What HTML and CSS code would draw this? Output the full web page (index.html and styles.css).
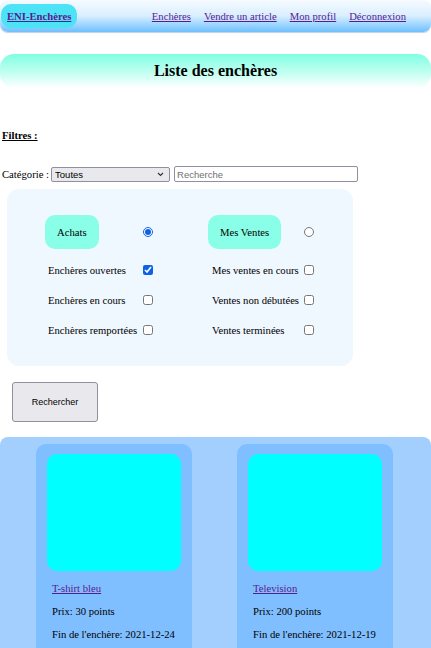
FILE: index.html
```html
<!DOCTYPE html>
<html lang="fr">
<head>
<meta charset="utf-8">
<title>ENI-Enchères</title>
<link rel="stylesheet" href="styles.css">
</head>
<body>
<header class="topbar">
  <a class="logo" href="#">ENI-Enchères</a>
  <nav class="nav">
    <a href="#">Enchères</a>
    <a href="#">Vendre un article</a>
    <a href="#">Mon profil</a>
    <a href="#">Déconnexion</a>
  </nav>
</header>

<h1 class="title-band">Liste des enchères</h1>

<section class="filters">
  <p class="filters-label">Filtres :</p>
  <div class="search-row">
    <label class="cat-label" for="cat">Catégorie :</label>
    <span class="select-wrap">
      <select id="cat" class="cat-select"><option>Toutes</option></select>
      <svg class="chevron" width="7" height="5" viewBox="0 0 7 5"><path d="M1 1 L3.5 3.5 L6 1" fill="none" stroke="#333" stroke-width="1.1"/></svg>
    </span>
    <input class="search-input" type="text" placeholder="Recherche">
  </div>

  <div class="panel">
    <span class="pill">Achats</span>
    <span class="ctl ctl-top"><input type="radio" name="mode" checked></span>
    <span></span>
    <span class="pill">Mes Ventes</span>
    <span class="ctl ctl-top"><input type="radio" name="mode"></span>

    <span class="opt">Enchères ouvertes</span>
    <span class="ctl"><input type="checkbox" checked></span>
    <span></span>
    <span class="opt opt-right">Mes ventes en cours</span>
    <span class="ctl"><input type="checkbox"></span>

    <span class="opt">Enchères en cours</span>
    <span class="ctl"><input type="checkbox"></span>
    <span></span>
    <span class="opt opt-right">Ventes non débutées</span>
    <span class="ctl"><input type="checkbox"></span>

    <span class="opt">Enchères remportées</span>
    <span class="ctl"><input type="checkbox"></span>
    <span></span>
    <span class="opt opt-right">Ventes terminées</span>
    <span class="ctl"><input type="checkbox"></span>
  </div>

  <button class="search-btn" type="button">Rechercher</button>
</section>

<section class="results">
  <article class="card">
    <div class="thumb"></div>
    <p class="card-line"><a href="#">T-shirt bleu</a></p>
    <p class="card-line">Prix: 30 points</p>
    <p class="card-line">Fin de l'enchère: 2021-12-24</p>
  </article>
  <article class="card">
    <div class="thumb"></div>
    <p class="card-line"><a href="#">Television</a></p>
    <p class="card-line">Prix: 200 points</p>
    <p class="card-line">Fin de l'enchère: 2021-12-19</p>
  </article>
</section>
</body>
</html>
```

FILE: styles.css
```css
html, body {
  margin: 0;
  padding: 0;
  background: #ffffff;
}

body {
  font-family: "Liberation Serif", "Times New Roman", serif;
  font-size: 10.67px;
  color: #000;
  overflow: hidden;
}

a {
  color: #5b1a8e;
}

/* ---------- top bar ---------- */
.topbar {
  height: 32px;
  box-sizing: border-box;
  display: flex;
  align-items: center;
  padding: 0 25px 0 1px;
  border-radius: 8px;
  background: linear-gradient(to bottom, #f6fbff 0%, #d9eeff 50%, #6cc0ff 100%);
  box-shadow: 0 1px 1px rgba(80, 120, 160, 0.35);
}

.logo {
  display: flex;
  align-items: center;
  height: 24px;
  padding: 0 6px;
  border-radius: 10px;
  background: #4ce3f7;
  font-weight: bold;
}

.nav {
  margin-left: auto;
  display: flex;
  gap: 13px;
}

/* ---------- title ---------- */
.title-band {
  margin: 22px 0 0 0;
  height: 34px;
  display: flex;
  align-items: center;
  justify-content: center;
  font-size: 16px;
  font-weight: bold;
  border-radius: 14px;
  background: linear-gradient(to bottom, #80ffe2 0%, #c8fff2 60%, #ffffff 100%);
}

/* ---------- filters ---------- */
.filters {
  padding: 0 0 0 2px;
}

.filters-label {
  margin: 0;
  padding-top: 41px;
  font-weight: bold;
  text-decoration: underline;
  line-height: 12px;
}

.search-row {
  margin-top: 25px;
  display: flex;
  align-items: center;
  height: 16px;
}

.cat-label {
  margin-right: 2px;
}

.select-wrap {
  position: relative;
  display: inline-flex;
}

.cat-select {
  appearance: none;
  -webkit-appearance: none;
  width: 119px;
  height: 15px;
  box-sizing: border-box;
  margin: 0;
  padding: 0 0 0 3px;
  border: 1px solid #8f8f9d;
  border-radius: 2px;
  background: #e9e9ed;
  font-family: "Liberation Sans", Arial, sans-serif;
  font-size: 9.5px;
  color: #000;
  line-height: 13px;
}

.chevron {
  position: absolute;
  right: 6px;
  top: 5px;
  pointer-events: none;
}

.search-input {
  margin: 0 0 0 4px;
  width: 184px;
  height: 16px;
  box-sizing: border-box;
  padding: 0 2px;
  border: 1px solid #8f8f9d;
  border-radius: 2px;
  background: #fff;
  font-family: "Liberation Sans", Arial, sans-serif;
  font-size: 9.5px;
}

.search-input::placeholder {
  color: #707070;
}

/* ---------- panel ---------- */
.panel {
  margin: 7px 0 0 5px;
  width: 346px;
  height: 177px;
  box-sizing: border-box;
  padding: 26px 0 0 38px;
  border-radius: 12px;
  background: #eff7ff;
  display: grid;
  grid-template-columns: 98px 10px 55px 96px 10px;
  grid-template-rows: 34px 36px 30px 30px;
  align-items: end;
}

.pill {
  justify-self: start;
  height: 34px;
  display: flex;
  align-items: center;
  padding: 0 12px;
  border-radius: 10px;
  background: #89ffe8;
}

.opt {
  height: 30px;
  display: flex;
  align-items: center;
  padding-left: 3px;
  white-space: nowrap;
}

.opt-right {
  padding-left: 4px;
}

.ctl {
  height: 30px;
  display: flex;
  align-items: center;
  justify-content: center;
}

.ctl-top {
  height: 34px;
}

.ctl input {
  margin: 0;
  width: 10px;
  height: 10px;
  accent-color: #0b62e6;
}

/* ---------- button ---------- */
.search-btn {
  display: block;
  margin: 16px 0 0 10px;
  width: 86px;
  height: 40px;
  border: 1px solid #8f8f9d;
  border-radius: 3px;
  background: #e9e9ed;
  font-family: "Liberation Sans", Arial, sans-serif;
  font-size: 9px;
  color: #000;
}

/* ---------- results ---------- */
.results {
  margin-top: 15px;
  height: 220px;
  display: flex;
  gap: 45px;
  padding: 7px 0 0 36px;
  border-radius: 8px 8px 0 0;
  background: #a2cffe;
}

.card {
  width: 156px;
  box-sizing: border-box;
  padding: 10px 11px;
  border-radius: 10px;
  background: #80bfff;
}

.thumb {
  height: 117px;
  border-radius: 10px;
  background: #00ffff;
}

.card-line {
  margin: 11px 0 0 5px;
  line-height: 12px;
}

.card-line:first-of-type {
  margin-top: 11px;
}
```
